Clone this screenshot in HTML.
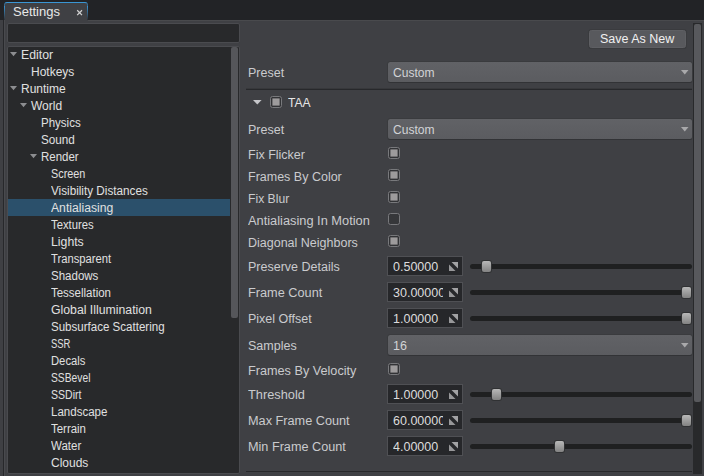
<!DOCTYPE html>
<html><head><meta charset="utf-8"><title>Settings</title>
<style>
html,body{margin:0;padding:0;}
body{width:704px;height:476px;overflow:hidden;background:#3f4044;position:relative;font-family:"Liberation Sans",sans-serif;font-size:12.5px;color:#dcdcdc;}
.a{position:absolute;}
.t{position:absolute;white-space:nowrap;line-height:16px;height:16px;transform-origin:0 50%;}
.tr{font-size:12px;color:#e0e0e0;}
.lb{color:#cacbce;}
.dd{position:absolute;left:388px;width:304px;height:20px;background:linear-gradient(#616266,#5b5c60);border-radius:2.5px;box-shadow:0 1px 0 0 #323336,0 0 0 1px #3a3b3e;}
.dd svg{position:absolute;left:292.7px;top:7.8px;}
.dd span{position:absolute;left:5px;top:3px;line-height:16px;color:#d2d3d6;transform-origin:0 50%;white-space:nowrap;}
.cb{position:absolute;left:388px;width:12px;height:12px;}
.nf{position:absolute;left:387px;width:74px;height:18px;border:1px solid #4f5054;background:#26272a;}
.nf span{position:absolute;left:5px;top:2px;width:50px;overflow:hidden;line-height:16px;color:#dcdcdc;white-space:nowrap;}
.nf svg{position:absolute;left:60.5px;top:5.3px;}
.sl{position:absolute;left:470px;width:222px;height:5px;border-radius:2.5px;background:#1f2021;}
.kn{position:absolute;width:9px;height:11px;border-radius:2px;background:linear-gradient(#b8b8b8,#828282);box-shadow:0 0 0 1px #303133;}
</style></head><body>
<!-- top tab bar -->
<div class="a" style="left:0;top:0;width:704px;height:20px;background:#222326;"></div>
<div class="a" style="left:4px;top:2px;width:84px;height:18px;background:#3f4044;border-top:1px solid #3a96d4;border-radius:3px 3px 0 0;box-sizing:border-box;border-left:1px solid #3a6a90;border-right:1px solid #3a6a90;"></div>
<div class="t" style="left:13px;top:4px;font-size:13px;color:#e8e8e8;">Settings</div>
<svg class="a" style="left:76px;top:9px;" width="8" height="8" viewBox="0 0 8 8"><path d="M1.2 1.3 L6 6.1 M6 1.3 L1.2 6.1" stroke="#d2d2d2" stroke-width="1.25" fill="none"/></svg>
<div class="a" style="left:88px;top:20px;width:616px;height:1px;background:#494a4d;"></div>
<div class="a" style="left:4px;top:6px;width:1px;height:14px;background:linear-gradient(#3a92cf,#36607f 55%,#313338);"></div>
<div class="a" style="left:87px;top:6px;width:1px;height:14px;background:linear-gradient(#3a92cf,#36607f 55%,#2b2d31);"></div>
<div class="a" style="left:4px;top:20px;width:1px;height:456px;background:#494a4e;"></div>
<!-- left edge line -->
<div class="a" style="left:3px;top:20px;width:1px;height:456px;background:#27282b;"></div>
<!-- search box -->
<div class="a" style="left:7px;top:23px;width:233px;height:20px;box-sizing:border-box;background:#28292b;border:1px solid #4a4b4f;border-radius:2px;"></div>
<!-- tree box -->
<div class="a" style="left:7px;top:46px;width:233px;height:428px;box-sizing:border-box;background:#28292b;border:1px solid #4a4b4f;border-radius:2px;"></div>
<!-- tree scrollbar -->
<div class="a" style="left:231px;top:47px;width:7px;height:271px;background:#55565a;border-radius:2px;"></div>
<!-- selection -->
<div class="a" style="left:8px;top:199px;width:222px;height:17px;background:#2b506b;"></div>

<svg class="a" style="left:10px;top:52px;" width="8" height="5" viewBox="0 0 8 5"><polygon points="0,0 7,0 3.5,4.2" fill="#8c8d90"/></svg>
<div class="t tr" style="left:21px;top:47px;transform:scaleX(1.0233);">Editor</div>
<div class="t tr" style="left:31px;top:64px;">Hotkeys</div>
<svg class="a" style="left:10px;top:86px;" width="8" height="5" viewBox="0 0 8 5"><polygon points="0,0 7,0 3.5,4.2" fill="#8c8d90"/></svg>
<div class="t tr" style="left:21px;top:81px;">Runtime</div>
<svg class="a" style="left:20px;top:103px;" width="8" height="5" viewBox="0 0 8 5"><polygon points="0,0 7,0 3.5,4.2" fill="#8c8d90"/></svg>
<div class="t tr" style="left:31px;top:98px;">World</div>
<div class="t tr" style="left:41px;top:115px;transform:scaleX(0.9600);">Physics</div>
<div class="t tr" style="left:41px;top:132px;transform:scaleX(0.9765);">Sound</div>
<svg class="a" style="left:30px;top:154px;" width="8" height="5" viewBox="0 0 8 5"><polygon points="0,0 7,0 3.5,4.2" fill="#8c8d90"/></svg>
<div class="t tr" style="left:41px;top:149px;transform:scaleX(0.9553);">Render</div>
<div class="t tr" style="left:51px;top:166px;transform:scaleX(0.9026);">Screen</div>
<div class="t tr" style="left:51px;top:183px;transform:scaleX(0.9758);">Visibility Distances</div>
<div class="t tr" style="left:51px;top:200px;transform:scaleX(1.0148);">Antialiasing</div>
<div class="t tr" style="left:51px;top:217px;transform:scaleX(0.9422);">Textures</div>
<div class="t tr" style="left:51px;top:234px;transform:scaleX(1.0226);">Lights</div>
<div class="t tr" style="left:51px;top:251px;transform:scaleX(0.9369);">Transparent</div>
<div class="t tr" style="left:51px;top:268px;transform:scaleX(0.9592);">Shadows</div>
<div class="t tr" style="left:51px;top:285px;transform:scaleX(0.9565);">Tessellation</div>
<div class="t tr" style="left:51px;top:302px;transform:scaleX(1.0224);">Global Illumination</div>
<div class="t tr" style="left:51px;top:319px;transform:scaleX(0.9619);">Subsurface Scattering</div>
<div class="t tr" style="left:51px;top:336px;transform:scaleX(0.7875);">SSR</div>
<div class="t tr" style="left:51px;top:353px;transform:scaleX(0.9375);">Decals</div>
<div class="t tr" style="left:51px;top:370px;transform:scaleX(0.8565);">SSBevel</div>
<div class="t tr" style="left:51px;top:387px;transform:scaleX(0.8771);">SSDirt</div>
<div class="t tr" style="left:51px;top:404px;transform:scaleX(0.9603);">Landscape</div>
<div class="t tr" style="left:51px;top:421px;transform:scaleX(0.9528);">Terrain</div>
<div class="t tr" style="left:51px;top:438px;transform:scaleX(0.9594);">Water</div>
<div class="t tr" style="left:51px;top:455px;">Clouds</div>

<!-- right panel -->
<div class="a" style="left:589px;top:30px;width:97px;height:18px;box-sizing:border-box;background:#58595d;border:1px solid #5e5f63;border-radius:2.5px;box-shadow:0 0 0 1px #3a3b3e,0 1px 0 0 #333437;"></div>
<div class="t" style="left:600px;top:31px;font-size:12.5px;color:#f0f0f0;">Save As New</div>
<div class="t lb" style="left:248px;top:65px;">Preset</div>
<div class="dd" style="top:62px;"><span style="transform:scaleX(0.9651);">Custom</span><svg width="8" height="5" viewBox="0 0 8 5"><polygon points="0,0 7.5,0 3.75,4.4" fill="#a9a9ab"/></svg></div>
<div class="a" style="left:246px;top:88px;width:446px;height:1px;background:#37383b;"></div><div class="a" style="left:246px;top:89px;width:446px;height:1px;background:#27282b;"></div>
<svg class="a" style="left:252.7px;top:99.8px;" width="9" height="5" viewBox="0 0 9 5"><polygon points="0,0 8.6,0 4.3,4.6" fill="#c6c6ca"/></svg>
<div class="cb" style="left:270px;top:96px;"><svg width="12" height="12" viewBox="0 0 12 12" style="display:block"><rect x="0.5" y="0.5" width="11" height="11" rx="2" fill="#323336" stroke="#78797c"/><rect x="2.4" y="2.4" width="7.2" height="7.2" fill="#9d9b9c"/></svg></div>
<div class="t" style="left:288px;top:95px;color:#e6e6e6;font-size:13px;transform:scaleX(0.9320);">TAA</div>
<div class="t lb" style="left:248px;top:122px;">Preset</div>
<div class="dd" style="top:119px;"><span style="transform:scaleX(0.9651);">Custom</span><svg width="8" height="5" viewBox="0 0 8 5"><polygon points="0,0 7.5,0 3.75,4.4" fill="#a9a9ab"/></svg></div>

<div class="t lb" style="left:248px;top:147px;">Fix Flicker</div>
<div class="cb" style="top:147px;"><svg width="12" height="12" viewBox="0 0 12 12" style="display:block"><rect x="0.5" y="0.5" width="11" height="11" rx="2" fill="#323336" stroke="#78797c"/><rect x="2.4" y="2.4" width="7.2" height="7.2" fill="#9d9b9c"/></svg></div>
<div class="t lb" style="left:248px;top:169px;">Frames By Color</div>
<div class="cb" style="top:169px;"><svg width="12" height="12" viewBox="0 0 12 12" style="display:block"><rect x="0.5" y="0.5" width="11" height="11" rx="2" fill="#323336" stroke="#78797c"/><rect x="2.4" y="2.4" width="7.2" height="7.2" fill="#9d9b9c"/></svg></div>
<div class="t lb" style="left:248px;top:191px;transform:scaleX(0.9738);">Fix Blur</div>
<div class="cb" style="top:191px;"><svg width="12" height="12" viewBox="0 0 12 12" style="display:block"><rect x="0.5" y="0.5" width="11" height="11" rx="2" fill="#323336" stroke="#78797c"/><rect x="2.4" y="2.4" width="7.2" height="7.2" fill="#9d9b9c"/></svg></div>
<div class="t lb" style="left:248px;top:213px;transform:scaleX(1.0254);">Antialiasing In Motion</div>
<div class="cb" style="top:213px;"><svg width="12" height="12" viewBox="0 0 12 12" style="display:block"><rect x="0.5" y="0.5" width="11" height="11" rx="2" fill="#36373a" stroke="#78797c"/></svg></div>
<div class="t lb" style="left:248px;top:235px;">Diagonal Neighbors</div>
<div class="cb" style="top:235px;"><svg width="12" height="12" viewBox="0 0 12 12" style="display:block"><rect x="0.5" y="0.5" width="11" height="11" rx="2" fill="#323336" stroke="#78797c"/><rect x="2.4" y="2.4" width="7.2" height="7.2" fill="#9d9b9c"/></svg></div>
<div class="t lb" style="left:248px;top:363px;transform:scaleX(1.0132);">Frames By Velocity</div>
<div class="cb" style="top:363px;"><svg width="12" height="12" viewBox="0 0 12 12" style="display:block"><rect x="0.5" y="0.5" width="11" height="11" rx="2" fill="#323336" stroke="#78797c"/><rect x="2.4" y="2.4" width="7.2" height="7.2" fill="#9d9b9c"/></svg></div>
<div class="t lb" style="left:248px;top:259px;">Preserve Details</div>
<div class="nf" style="top:256px;"><span>0.50000</span><svg width="9" height="9" viewBox="0 0 9 9"><polygon points="2.5,0 9,0 9,6.5" fill="#a2a2a4"/><polygon points="0,2.5 0,9 6.5,9" fill="#98989a"/></svg></div>
<div class="sl" style="top:264px;"></div>
<div class="kn" style="left:482px;top:261px;"></div>
<div class="t lb" style="left:248px;top:285px;transform:scaleX(1.0181);">Frame Count</div>
<div class="nf" style="top:282px;"><span>30.00000</span><svg width="9" height="9" viewBox="0 0 9 9"><polygon points="2.5,0 9,0 9,6.5" fill="#a2a2a4"/><polygon points="0,2.5 0,9 6.5,9" fill="#98989a"/></svg></div>
<div class="sl" style="top:290px;"></div>
<div class="kn" style="left:682px;top:287px;"></div>
<div class="t lb" style="left:248px;top:311px;">Pixel Offset</div>
<div class="nf" style="top:308px;"><span>1.00000</span><svg width="9" height="9" viewBox="0 0 9 9"><polygon points="2.5,0 9,0 9,6.5" fill="#a2a2a4"/><polygon points="0,2.5 0,9 6.5,9" fill="#98989a"/></svg></div>
<div class="sl" style="top:316px;"></div>
<div class="kn" style="left:682px;top:313px;"></div>
<div class="t lb" style="left:248px;top:387px;transform:scaleX(1.0227);">Threshold</div>
<div class="nf" style="top:384px;"><span>1.00000</span><svg width="9" height="9" viewBox="0 0 9 9"><polygon points="2.5,0 9,0 9,6.5" fill="#a2a2a4"/><polygon points="0,2.5 0,9 6.5,9" fill="#98989a"/></svg></div>
<div class="sl" style="top:392px;"></div>
<div class="kn" style="left:492px;top:389px;"></div>
<div class="t lb" style="left:248px;top:413px;transform:scaleX(1.0162);">Max Frame Count</div>
<div class="nf" style="top:410px;"><span>60.00000</span><svg width="9" height="9" viewBox="0 0 9 9"><polygon points="2.5,0 9,0 9,6.5" fill="#a2a2a4"/><polygon points="0,2.5 0,9 6.5,9" fill="#98989a"/></svg></div>
<div class="sl" style="top:418px;"></div>
<div class="kn" style="left:682px;top:415px;"></div>
<div class="t lb" style="left:248px;top:439px;transform:scaleX(1.0125);">Min Frame Count</div>
<div class="nf" style="top:436px;"><span>4.00000</span><svg width="9" height="9" viewBox="0 0 9 9"><polygon points="2.5,0 9,0 9,6.5" fill="#a2a2a4"/><polygon points="0,2.5 0,9 6.5,9" fill="#98989a"/></svg></div>
<div class="sl" style="top:444px;"></div>
<div class="kn" style="left:555px;top:441px;"></div>

<div class="t lb" style="left:248px;top:338px;">Samples</div>
<div class="dd" style="top:335px;"><span>16</span><svg width="8" height="5" viewBox="0 0 8 5"><polygon points="0,0 7.5,0 3.75,4.4" fill="#a9a9ab"/></svg></div>
<div class="a" style="left:246px;top:471px;width:446px;height:1px;background:#27282a;"></div>
<!-- right scrollbar -->
<div class="a" style="left:693px;top:23px;width:9px;height:451px;background:#28292b;"></div>
<div class="a" style="left:694px;top:24px;width:7px;height:378px;background:#58595d;border-radius:2px;"></div>
</body></html>
